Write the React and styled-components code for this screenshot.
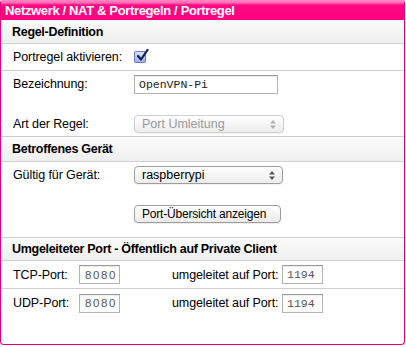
import React from 'react';
import styled, { createGlobalStyle } from 'styled-components';

const GlobalStyle = createGlobalStyle`
	html, body {
		margin: 0;
		padding: 0;
		background: #fff;
	}
	body {
		font-family: "Liberation Sans", Arial, sans-serif;
		font-size: 12.5px;
		color: #000;
	}
`;

const Frame = styled.div`
	box-sizing: border-box;
	width: 405px;
	height: 345px;
	border: 1px solid #e2007a;
	border-top: none;
	border-radius: 3px 3px 4px 4px;
	overflow: hidden;
	display: flex;
	flex-direction: column;
`;

const TitleBar = styled.div`
	height: 20px;
	padding-left: 4px;
	display: flex;
	align-items: center;
	background: linear-gradient(to bottom, #ff8cc6 0px, #ff66b3 3px, #ff0a85 5px, #ff0080 100%);
	color: #fff;
	font-weight: bold;
	font-size: 13px;
	letter-spacing: -0.35px;
`;

const SectionHead = styled.div`
	height: ${(p) => p.h || 23}px;
	box-sizing: border-box;
	padding-left: 11px;
	display: flex;
	align-items: center;
	background: linear-gradient(to bottom, #fbfbfb, #efefef);
	border-top: ${(p) => (p.top ? '1px solid #cfcfcf' : 'none')};
	border-bottom: 1px solid #cfcfcf;
	font-weight: bold;
	font-size: 12.5px;
	letter-spacing: -0.3px;
`;

const Row = styled.div`
	box-sizing: border-box;
	height: ${(p) => p.h}px;
	display: flex;
	align-items: ${(p) => (p.top ? 'flex-start' : 'center')};
	padding-top: ${(p) => p.pt || 0}px;
	padding-left: 12px;
	border-bottom: ${(p) => (p.line ? '1px solid #cfcfcf' : 'none')};
`;

const Label = styled.div`
	width: ${(p) => p.w || 121}px;
	flex: none;
	line-height: 18px;
	white-space: nowrap;
	letter-spacing: -0.1px;
`;

const Check = styled.span`
	box-sizing: border-box;
	width: 12px;
	height: 12px;
	margin-top: -1px;
	border: 1px solid #6f74c9;
	border-radius: 2px;
	background: linear-gradient(to bottom, #d9e2ff, #9fb4f0);
	position: relative;
`;

const CheckMark = styled.svg`
	position: absolute;
	left: 1px;
	top: -3px;
`;

const TextInput = styled.div`
	box-sizing: border-box;
	width: ${(p) => p.w}px;
	height: 19px;
	border: 1px solid #b3b3b3;
	border-top-color: #9a9a9a;
	box-shadow: inset 0 1px 1px rgba(0, 0, 0, 0.08);
	padding-left: ${(p) => p.pl || 4}px;
	display: flex;
	align-items: center;
	font-family: ${(p) => (p.sans ? '"Liberation Sans", Arial, sans-serif' : '"Liberation Mono", "Courier New", monospace')};
	font-size: ${(p) => p.fs || 11.5}px;
	letter-spacing: ${(p) => p.ls || 0}px;
	color: ${(p) => p.c || '#222'};
	background: #fff;
`;

const Select = styled.div`
	box-sizing: border-box;
	width: ${(p) => p.w}px;
	height: 18px;
	border: 1px solid ${(p) => (p.disabled ? '#cfcfcf' : '#9d9d9d')};
	border-radius: 4px;
	background: linear-gradient(to bottom, #ffffff, #ececec);
	box-shadow: 0 1px 1px rgba(0, 0, 0, 0.06);
	padding: 0 7px 0 7px;
	display: flex;
	align-items: center;
	justify-content: space-between;
	font-size: 12.5px;
	color: ${(p) => (p.disabled ? '#9a9a9a' : '#000')};
`;

const Button = styled.div`
	box-sizing: border-box;
	width: 147px;
	height: 18px;
	border: 1px solid #9d9d9d;
	border-radius: 4px;
	background: linear-gradient(to bottom, #ffffff, #ebebeb);
	box-shadow: 0 1px 1px rgba(0, 0, 0, 0.08);
	padding-left: 7px;
	display: flex;
	align-items: center;
	font-size: 12px;
	letter-spacing: -0.2px;
`;

const Spacer = styled.div`
	width: ${(p) => p.w}px;
	flex: none;
`;

const Arrows = ({ color }) => (
	<svg width="6" height="9" viewBox="0 0 6 9">
		<path d="M3 0 L6 3.5 L0 3.5 Z" fill={color} />
		<path d="M3 9 L6 5.5 L0 5.5 Z" fill={color} />
	</svg>
);

const PortRow = ({ name, from, to, line }) => (
	<Row h={28} line={line}>
		<Label w={66}>{name}</Label>
		<TextInput w={41} pl={5} ls={1.6} fs={11.5} c="#555" sans>{from}</TextInput>
		<Spacer w={52} />
		<Label w={110}>umgeleitet auf Port:</Label>
		<TextInput w={41} pl={4} c="#555">{to}</TextInput>
	</Row>
);

export default function App() {
	return (
		<>
			<GlobalStyle />
			<Frame>
				<TitleBar>Netzwerk / NAT &amp; Portregeln / Portregel</TitleBar>
				<SectionHead h={24}>Regel-Definition</SectionHead>
				<Row h={27} line>
					<Label>Portregel aktivieren:</Label>
					<Check>
						<CheckMark width="13" height="13" viewBox="0 0 13 13">
							<path d="M2 7 L5 10.5 L11.5 1" stroke="#10205a" strokeWidth="2.2" fill="none" strokeLinecap="round" strokeLinejoin="round" />
						</CheckMark>
					</Check>
				</Row>
				<Row h={34} top pt={4}>
					<Label>Bezeichnung:</Label>
					<TextInput w={144} pl={4}>OpenVPN-Pi</TextInput>
				</Row>
				<Row h={32} top pt={10} line>
					<Label>Art der Regel:</Label>
					<Select w={150} disabled>
						Port Umleitung
						<Arrows color="#b0b0b0" />
					</Select>
				</Row>
				<SectionHead h={25}>Betroffenes Gerät</SectionHead>
				<Row h={40} top pt={4}>
					<Label>Gültig für Gerät:</Label>
					<Select w={149}>
						raspberrypi
						<Arrows color="#555" />
					</Select>
				</Row>
				<Row h={35} top pt={3}>
					<Label />
					<Button>Port-Übersicht anzeigen</Button>
				</Row>
				<SectionHead h={24} top>Umgeleiteter Port - Öffentlich auf Private Client</SectionHead>
				<PortRow name="TCP-Port:" from="8080" to="1194" line />
				<PortRow name="UDP-Port:" from="8080" to="1194" />
			</Frame>
		</>
	);
}
